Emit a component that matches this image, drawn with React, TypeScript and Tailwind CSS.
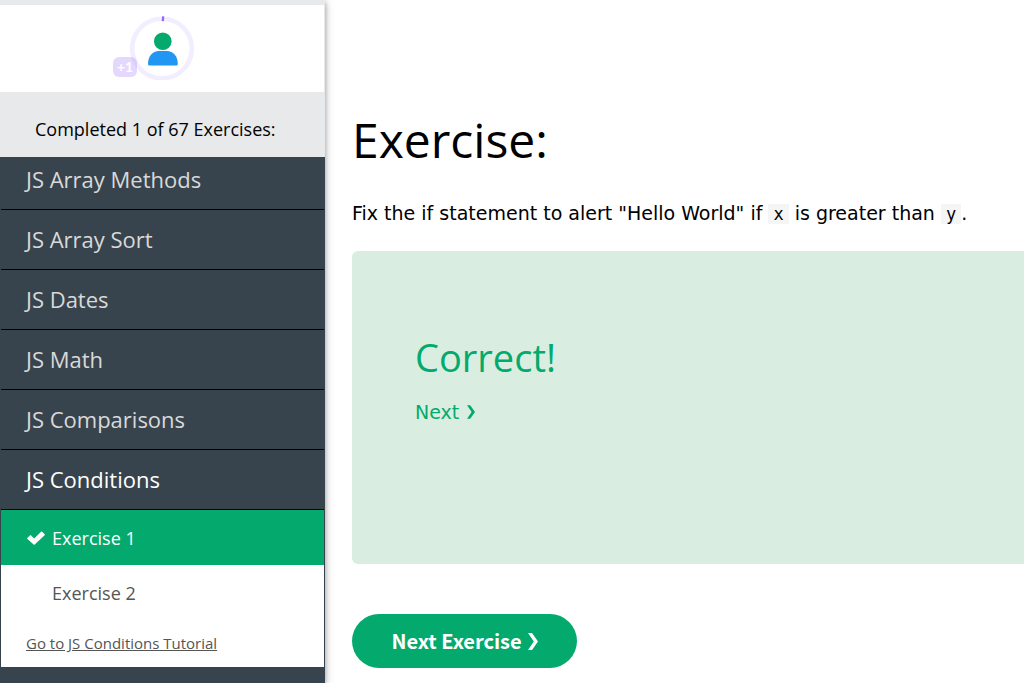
import React from "react";

type Topic = { title: string; active?: boolean };

const topics: Topic[] = [
  { title: "JS Array Methods" },
  { title: "JS Array Sort" },
  { title: "JS Dates" },
  { title: "JS Math" },
  { title: "JS Comparisons" },
  { title: "JS Conditions", active: true },
];

function ProfileProgress() {
  return (
    <button type="button" aria-label="Profile progress" className="relative block size-16">
      <svg viewBox="0 0 64 64" className="size-16" aria-hidden="true">
        <circle cx="32" cy="32.500" r="29.8" fill="none" stroke="#f3eeff" strokeWidth="4.6" />
        <path d="M33.200 0.300l-.4 4.900" stroke="#9763f6" strokeWidth="2.2" />
        <ellipse cx="32.8" cy="25.200" rx="8.8" ry="8.8" fill="#04aa6d" />
        <path
          d="M18 48c0-8 5-12.900 10.600-12.900h8.600c5.600 0 10.600 4.900 10.600 12.900q0 1.500-1.500 1.500H19.500q-1.500 0-1.500-1.500z"
          fill="#2196f3"
        />
      </svg>
      <span className="absolute -left-[17px] top-[41px] flex h-5 w-6 items-center justify-center rounded-md bg-[#9763f6]/25 font-['Lato'] text-sm font-bold text-white">
        +1
      </span>
    </button>
  );
}

function CheckIcon() {
  return (
    <svg viewBox="-1 0 19 14" className="h-[14px] w-[19px]" aria-hidden="true">
      <path
        d="M17.600 3.200 15.200.800a.8.8 0 0 0-1.150 0L7.200 7.600 4.050 4.400a.8.8 0 0 0-1.150 0L.5 6.800a.8.8 0 0 0 0 1.150l6.100 5.550a.8.8 0 0 0 1.150 0L17.600 4.350a.8.8 0 0 0 0-1.150z"
        fill="currentColor"
      />
    </svg>
  );
}

function ChevronIcon({ className }: { className: string }) {
  return (
    <svg viewBox="0 0 10 17" className={className} aria-hidden="true">
      <path d="M0 0h4L10 8.500 4 17H0l5.800-8.500z" fill="currentColor" />
    </svg>
  );
}

function Sidebar() {
  return (
    <aside className="relative flex w-[325px] shrink-0 flex-col bg-[#38444d] font-['Open_Sans',sans-serif] shadow-[0_2px_5px_rgba(0,0,0,0.3),0_2px_10px_rgba(0,0,0,0.2)]">
      <div className="bg-[#e7e9eb] pt-[5px] pr-px">
        <div className="flex h-[87px] justify-center bg-white pt-[11px]">
          <ProfileProgress />
        </div>
      </div>
      <p className="flex h-[65px] items-center bg-[#e7e9eb] px-[35px] pt-[8px] text-lg text-black">
        Completed 1 of 67 Exercises:
      </p>
      <nav aria-label="Exercises" className="overflow-hidden px-px">
        <ul className="-mt-[7px]">
          {topics.map((t) => (
            <li key={t.title} className="border-b border-black">
              <a
                href="#"
                className={
                  t.active
                    ? "flex h-[59px] items-center px-[25px] text-[22px] text-white"
                    : "flex h-[59px] items-center px-[25px] text-[22px] text-[#d9d9d9]"
                }
              >
                {t.title}
              </a>
            </li>
          ))}
        </ul>
        <div className="bg-white text-[#555]">
          <a
            href="#"
            className="flex h-[55px] items-center gap-[7px] bg-[#04aa6d] px-[25px] text-lg font-medium text-white"
          >
            <CheckIcon />
            Exercise 1
          </a>
          <a href="#" className="flex h-[55px] items-center px-[51px] text-lg">
            Exercise 2
          </a>
          <a href="#" className="flex h-[47px] items-center px-[25px] text-[15px] underline">
            Go to JS Conditions Tutorial
          </a>
        </div>
      </nav>
    </aside>
  );
}

function Code({ children }: { children: React.ReactNode }) {
  return <code className="bg-[#f5f5f5] px-[5px] font-['DejaVu_Sans_Mono',monospace] text-[17px]">{children}</code>;
}

export default function App() {
  return (
    <div className="flex min-h-screen bg-white">
      <Sidebar />
      <main className="min-w-0 flex-1 pt-[105px] pl-[27px] font-['DejaVu_Sans',sans-serif] text-black">
        <h1 className="font-['Open_Sans',sans-serif] text-5xl leading-[70px]">Exercise:</h1>
        <p className="mt-6 text-[19px] leading-7">
          Fix the if statement to alert "Hello World" if <Code>x</Code> is greater than <Code>y</Code>.
        </p>
        <section className="mt-[23px] h-[313px] rounded-l-md bg-[#d9eee1] px-[63px] pt-[79px] text-[#04aa6d]">
          <h2 className="font-['Open_Sans',sans-serif] text-[38px] leading-[54px]">Correct!</h2>
          <a href="#" className="mt-[14px] inline-flex items-center gap-2 text-[19px] leading-7">
            Next
            <ChevronIcon className="h-[14px] w-[8px]" />
          </a>
        </section>
        <button
          type="button"
          className="mt-[50px] flex h-[54px] w-[225px] items-center justify-center gap-[6px] rounded-full bg-[#04aa6d] font-['Noto_Sans_CJK_JP',sans-serif] text-xl font-bold text-white"
        >
          Next Exercise
          <ChevronIcon className="h-[17px] w-[10px]" />
        </button>
      </main>
    </div>
  );
}
